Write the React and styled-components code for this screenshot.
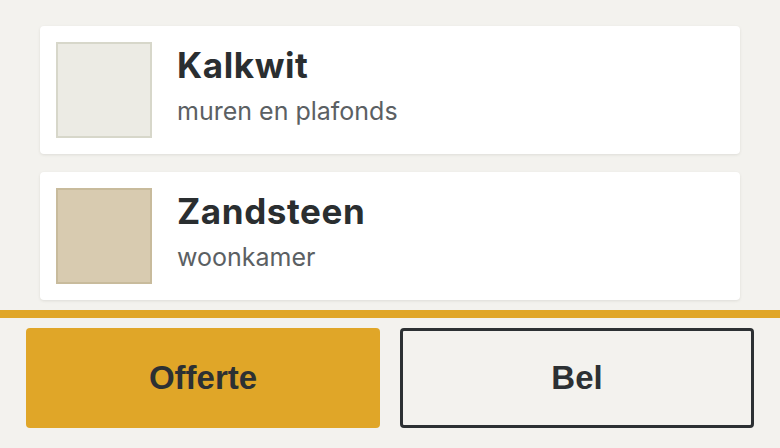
import React from "react";
import styled, { createGlobalStyle } from "styled-components";

const GlobalStyle = createGlobalStyle`
  html, body {
    margin: 0;
    padding: 0;
    background: #f3f2ee;
  }
  #root {
    height: 100vh;
  }
  * {
    box-sizing: border-box;
  }
`;

const colors = [
  { id: 1, name: "Kalkwit", room: "muren en plafonds", fill: "#ecebe4", edge: "#d7d7ca" },
  { id: 2, name: "Zandsteen", room: "woonkamer", fill: "#d8cbb0", edge: "#c8bb9c" },
];

const App = () => {
  return (
    <Page>
      <GlobalStyle />
      <List>
        {colors.map((c) => (
          <Card key={c.id}>
            <Swatch fill={c.fill} edge={c.edge} />
            <Info>
              <Title>{c.name}</Title>
              <Sub>{c.room}</Sub>
            </Info>
          </Card>
        ))}
      </List>
      <ActionBar>
        <Button primary>Offerte</Button>
        <Button>Bel</Button>
      </ActionBar>
    </Page>
  );
};

const Page = styled.div`
  height: 100%;
  display: flex;
  flex-direction: column;
  background: #f3f2ee;
`;

const List = styled.div`
  flex: 1;
  overflow: hidden;
  padding: 26px 40px 0;
  display: flex;
  flex-direction: column;
  gap: 18px;
`;

const Card = styled.div`
  background: #fff;
  border-radius: 4px;
  box-shadow: 0 1px 3px rgba(40, 35, 20, 0.1);
  padding: 16px;
  display: flex;
  align-items: flex-start;
  gap: 25px;
`;

const Swatch = styled.div`
  width: 96px;
  height: 96px;
  flex-shrink: 0;
  background: ${({ fill }) => fill};
  border: 2px solid ${({ edge }) => edge};
`;

const Info = styled.div`
  display: flex;
  flex-direction: column;
  padding-top: 3px;
  font-family: Inter, "Liberation Sans", sans-serif;
`;

const Title = styled.h2`
  margin: 0;
  font-size: 35px;
  line-height: 40px;
  font-weight: 700;
  letter-spacing: 0.6px;
  color: #2a2e30;
`;

const Sub = styled.p`
  margin: 11px 0 0;
  font-size: 25px;
  line-height: 30px;
  color: #5b6063;
`;

const ActionBar = styled.div`
  border-top: 8px solid #e0a628;
  padding: 10px 26px 20px;
  display: grid;
  grid-template-columns: 1fr 1fr;
  gap: 20px;
`;

const Button = styled.button`
  height: 100px;
  border-radius: 4px;
  font-family: "Liberation Sans", Arial, sans-serif;
  font-size: 33px;
  font-weight: 700;
  color: #2c3033;
  cursor: pointer;
  background: ${({ primary }) => (primary ? "#e0a628" : "transparent")};
  border: ${({ primary }) => (primary ? "none" : "3px solid #2c3033")};
`;

export default App;
